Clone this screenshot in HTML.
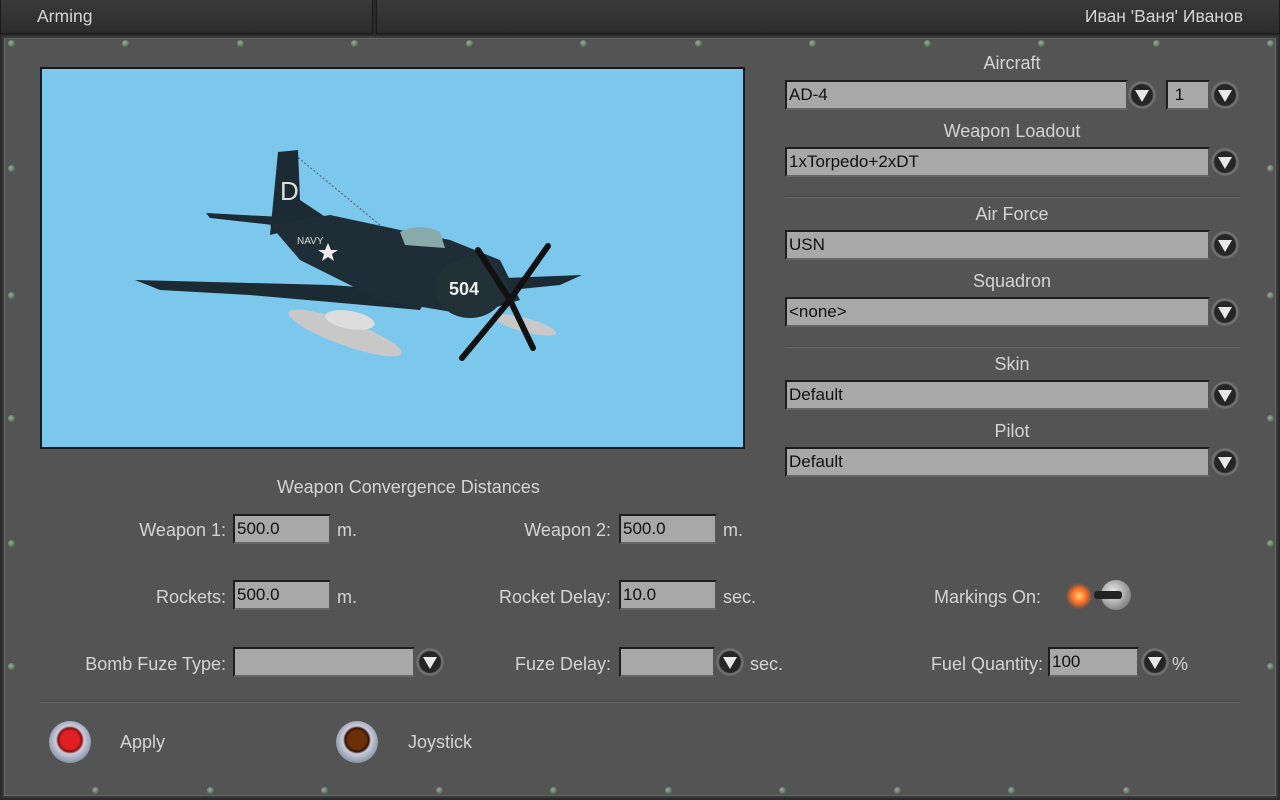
<!DOCTYPE html>
<html><head><meta charset="utf-8"><style>
*{margin:0;padding:0;box-sizing:border-box}
body{width:1280px;height:800px;overflow:hidden;background:#2a2a2a;font-family:"Liberation Sans",sans-serif;color:#d4d4d4;position:relative}
.tab{position:absolute;top:0;height:34px;background:linear-gradient(#3a3a3a,#2c2c2c);border:1px solid #1a1a1a;border-top:none;font-size:17.5px;line-height:32px}
#panel{position:absolute;left:2px;top:36px;width:1276px;height:762px;background:#545454;border:2px solid #3a3a3a;box-shadow:inset 0 0 0 1px #666}
.a{position:absolute}
.lbl{position:absolute;font-size:18px;white-space:nowrap}
.c{text-align:center;width:460px;left:782px}
.in{position:absolute;height:30px;background:#a8a8a8;border:2px solid #1e1e1e;border-right-color:#555;border-bottom-color:#666;color:#111;font-size:17px;padding:3px 2px;line-height:20px}
.dd{position:absolute;width:28px;height:28px;border-radius:50%;background:radial-gradient(circle,#262626 52%,#777 60%,#4a4a4a 85%);}
.dd:after{content:"";position:absolute;left:7px;top:9px;border-left:7px solid transparent;border-right:7px solid transparent;border-top:12px solid #e8e8e8}
.sep{position:absolute;height:2px;background:#4a4a4a;border-bottom:1px solid #666}
.rv{position:absolute;width:7px;height:7px;border-radius:50%;background:radial-gradient(circle at 40% 40%,#9ab09a,#3a4a3a)}
</style></head><body>
<div class="tab" style="left:0;width:373px;padding-left:36px">Arming</div>
<div class="tab" style="left:376px;width:904px;text-align:right;padding-right:36px">Иван 'Ваня' Иванов</div>
<div id="panel"></div>
<div class="rv" style="left:8px;top:40px"></div><div class="rv" style="left:122px;top:40px"></div><div class="rv" style="left:237px;top:40px"></div><div class="rv" style="left:351px;top:40px"></div><div class="rv" style="left:466px;top:40px"></div><div class="rv" style="left:580px;top:40px"></div><div class="rv" style="left:695px;top:40px"></div><div class="rv" style="left:809px;top:40px"></div><div class="rv" style="left:924px;top:40px"></div><div class="rv" style="left:1038px;top:40px"></div><div class="rv" style="left:1153px;top:40px"></div><div class="rv" style="left:1267px;top:40px"></div>
<div class="rv" style="left:92px;top:787px"></div><div class="rv" style="left:207px;top:787px"></div><div class="rv" style="left:321px;top:787px"></div><div class="rv" style="left:436px;top:787px"></div><div class="rv" style="left:550px;top:787px"></div><div class="rv" style="left:665px;top:787px"></div><div class="rv" style="left:779px;top:787px"></div><div class="rv" style="left:894px;top:787px"></div><div class="rv" style="left:1008px;top:787px"></div><div class="rv" style="left:1123px;top:787px"></div>
<div class="rv" style="left:8px;top:165px"></div><div class="rv" style="left:8px;top:292px"></div><div class="rv" style="left:8px;top:415px"></div><div class="rv" style="left:8px;top:540px"></div><div class="rv" style="left:8px;top:663px"></div>
<div class="rv" style="left:1267px;top:165px"></div><div class="rv" style="left:1267px;top:292px"></div><div class="rv" style="left:1267px;top:415px"></div><div class="rv" style="left:1267px;top:540px"></div><div class="rv" style="left:1267px;top:663px"></div>

<div class="a" style="left:40px;top:67px;width:705px;height:382px;background:#7cc8ec;border:2px solid #1a1a1a"></div>
<svg class="a" style="left:0;top:0" width="800" height="460">
<line x1="295" y1="155" x2="380" y2="225" stroke="#556" stroke-dasharray="2 2"/>
<polygon points="135,280 330,285 430,292 420,310 330,302 250,295 160,290" fill="#1c2a33"/>
<polygon points="206,213 300,218 300,228 210,218" fill="#1c2a33"/>
<polygon points="278,152 298,150 300,200 330,220 270,235" fill="#1c2a33"/>
<polygon points="270,225 330,215 400,230 450,240 500,260 520,300 470,315 380,300 300,260" fill="#1f2d36"/>
<ellipse cx="470" cy="288" rx="35" ry="30" fill="#223038"/>
<path d="M400 232 Q420 222 440 232 L445 248 L405 245 Z" fill="#8aa"/>
<polygon points="505,278 582,275 560,285 510,290" fill="#1c2a33"/>
<ellipse cx="345" cy="333" rx="60" ry="12" transform="rotate(20 345 333)" fill="#c8c8c8"/>
<ellipse cx="350" cy="320" rx="25" ry="9" transform="rotate(10 350 320)" fill="#ddd"/>
<ellipse cx="525" cy="325" rx="32" ry="7" transform="rotate(15 525 325)" fill="#c8c8c8"/>
<g stroke="#111" stroke-width="6" stroke-linecap="round"><line x1="510" y1="300" x2="548" y2="246"/><line x1="510" y1="300" x2="462" y2="358"/><line x1="510" y1="300" x2="478" y2="250"/><line x1="510" y1="300" x2="533" y2="348"/></g>
<text x="449" y="295" fill="#eee" font-size="18" font-family="Liberation Sans" font-weight="bold">504</text>
<text x="297" y="244" fill="#ddd" font-size="10" font-family="Liberation Sans">NAVY</text>
<text x="280" y="200" fill="#ddd" font-size="26" font-family="Liberation Sans">D</text>
<polygon points="328,243 331,250 338,250 332,254 334,261 328,257 322,261 324,254 318,250 325,250" fill="#eee"/>
</svg>

<div class="lbl c" style="top:53px">Aircraft</div>
<div class="in" style="left:785px;top:80px;width:343px">AD-4</div><div class="dd" style="left:1128px;top:81px"></div>
<div class="in" style="left:1166px;top:80px;width:44px">&nbsp;1</div><div class="dd" style="left:1211px;top:81px"></div>
<div class="lbl c" style="top:121px">Weapon Loadout</div>
<div class="in" style="left:785px;top:147px;width:425px">1xTorpedo+2xDT</div><div class="dd" style="left:1211px;top:148px"></div>
<div class="sep" style="left:785px;top:196px;width:455px"></div>
<div class="lbl c" style="top:204px">Air Force</div>
<div class="in" style="left:785px;top:230px;width:425px">USN</div><div class="dd" style="left:1211px;top:231px"></div>
<div class="lbl c" style="top:271px">Squadron</div>
<div class="in" style="left:785px;top:297px;width:425px">&lt;none&gt;</div><div class="dd" style="left:1211px;top:298px"></div>
<div class="sep" style="left:785px;top:346px;width:455px"></div>
<div class="lbl c" style="top:354px">Skin</div>
<div class="in" style="left:785px;top:380px;width:425px">Default</div><div class="dd" style="left:1211px;top:381px"></div>
<div class="lbl c" style="top:421px">Pilot</div>
<div class="in" style="left:785px;top:447px;width:425px">Default</div><div class="dd" style="left:1211px;top:448px"></div>

<div class="lbl" style="left:277px;top:477px">Weapon Convergence Distances</div>
<div class="lbl" style="right:1054px;top:520px">Weapon 1:</div><div class="in" style="left:233px;top:514px;width:98px">500.0</div><div class="lbl" style="left:337px;top:520px">m.</div>
<div class="lbl" style="right:669px;top:520px">Weapon 2:</div><div class="in" style="left:619px;top:514px;width:98px">500.0</div><div class="lbl" style="left:723px;top:520px">m.</div>
<div class="lbl" style="right:1054px;top:587px">Rockets:</div><div class="in" style="left:233px;top:580px;width:98px">500.0</div><div class="lbl" style="left:337px;top:587px">m.</div>
<div class="lbl" style="right:669px;top:587px">Rocket Delay:</div><div class="in" style="left:619px;top:580px;width:98px">10.0</div><div class="lbl" style="left:723px;top:587px">sec.</div>
<div class="lbl" style="right:239px;top:587px">Markings On:</div>
<div class="a" style="left:1066px;top:583px;width:26px;height:26px;border-radius:50%;background:radial-gradient(circle,#ffd080,#ff6a20 40%,rgba(200,60,20,0) 72%)"></div>
<div class="a" style="left:1101px;top:580px;width:30px;height:30px;border-radius:50%;background:radial-gradient(circle at 40% 40%,#eee,#888 70%,#555)"></div>
<div class="a" style="left:1094px;top:591px;width:28px;height:8px;background:#222;border-radius:3px"></div>
<div class="lbl" style="right:1054px;top:654px">Bomb Fuze Type:</div><div class="in" style="left:233px;top:647px;width:182px"></div><div class="dd" style="left:416px;top:648px"></div>
<div class="lbl" style="right:669px;top:654px">Fuze Delay:</div><div class="in" style="left:619px;top:647px;width:96px"></div><div class="dd" style="left:716px;top:648px"></div><div class="lbl" style="left:750px;top:654px">sec.</div>
<div class="lbl" style="right:237px;top:654px">Fuel Quantity:</div><div class="in" style="left:1048px;top:647px;width:91px">100</div><div class="dd" style="left:1141px;top:648px"></div><div class="lbl" style="left:1172px;top:654px">%</div>
<div class="sep" style="left:40px;top:701px;width:1200px"></div>
<div class="a" style="left:49px;top:721px;width:42px;height:42px;border-radius:50%;background:radial-gradient(circle at 50% 45%,#e02020 30%,#801010 38%,#ccd 45%,#789 80%,#333)"></div>
<div class="lbl" style="left:120px;top:732px">Apply</div>
<div class="a" style="left:336px;top:721px;width:42px;height:42px;border-radius:50%;background:radial-gradient(circle at 50% 45%,#6a3008 30%,#301004 38%,#ccd 45%,#789 80%,#333)"></div>
<div class="lbl" style="left:408px;top:732px">Joystick</div>
</body></html>
